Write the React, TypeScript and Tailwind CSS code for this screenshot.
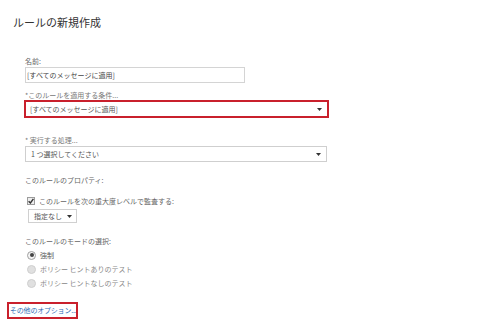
import React from "react";

const font = { fontFamily: '"Noto Sans CJK JP", "Noto Sans", sans-serif' };

function Arrow() {
  return (
    <svg width="5" height="3" viewBox="0 0 5 3" className="shrink-0">
      <path d="M0 0h5L2.5 3z" fill="#333" />
    </svg>
  );
}

function Radio({ checked, label }: { checked?: boolean; label: string }) {
  return (
    <div className="flex items-center h-[14px] gap-[4px]">
      <span
        className={
          "w-[9px] h-[9px] rounded-full border flex items-center justify-center " +
          (checked ? "border-[#a0a0a0] bg-[#f4f4f4]" : "border-[#cfcfcf] bg-[#e0e0e0]")
        }
      >
        {checked && <span className="w-[4px] h-[4px] rounded-full bg-[#444]" />}
      </span>
      <span className={checked ? "text-[#555]" : "text-[#888]"}>{label}</span>
    </div>
  );
}

export default function App() {
  return (
    <div className="w-[480px] h-[320px] bg-white overflow-hidden flex flex-col whitespace-nowrap" style={font}>
      {/* Title */}
      <div className="pt-[14px] pl-[13px] text-[11px] leading-[16px] text-[#333]">ルールの新規作成</div>

      {/* Form */}
      <div className="pl-[25px] flex flex-col text-[7px] text-[#666]">
        <div className="mt-[26px] h-[10px] leading-[10px]">名前:</div>
        <div className="mt-[1px] w-[220px] h-[16px] border border-[#d4d4d4] flex items-center pl-[1px] text-[#444]">
          [すべてのメッセージに適用]
        </div>

        <div className="mt-[7px] h-[10px] leading-[10px] text-[#777]">*このルールを適用する条件...</div>
        <div className="-ml-[1px] w-[305px] h-[18px] border-2 border-[#c9202c] flex items-center justify-between pl-[4px] pr-[5px] text-[#555]">
          <span>[すべてのメッセージに適用]</span>
          <Arrow />
        </div>

        <div className="mt-[17px] h-[10px] leading-[10px] text-[#777]">* 実行する処理...</div>
        <div className="mt-[1px] w-[302px] h-[16px] border border-[#cfcfcf] flex items-center justify-between pl-[5px] pr-[5px] text-[#555]">
          <span>1 つ選択してください</span>
          <Arrow />
        </div>

        <div className="mt-[13px] h-[10px] leading-[10px]">このルールのプロパティ:</div>

        <div className="mt-[11px] h-[10px] flex items-center gap-[4px] ml-[2px]">
          <span className="w-[8px] h-[8px] border border-[#9c9c9c] bg-[#eee] flex items-center justify-center">
            <svg width="6" height="6" viewBox="0 0 6 6">
              <path d="M0.6 3.2L2.4 5L5.4 0.8" stroke="#333" strokeWidth="1.4" fill="none" />
            </svg>
          </span>
          <span>このルールを次の重大度レベルで監査する:</span>
        </div>

        <div className="mt-[3px] ml-[3px] w-[49px] h-[14px] border border-[#d0d0d0] flex items-center justify-between pl-[5px] pr-[4px] text-[#555]">
          <span>指定なし</span>
          <Arrow />
        </div>

        <div className="mt-[13px] h-[10px] leading-[10px]">このルールのモードの選択:</div>

        <div className="mt-[2px] ml-[2px] flex flex-col">
          <Radio checked label="強制" />
          <Radio label="ポリシー ヒントありのテスト" />
          <Radio label="ポリシー ヒントなしのテスト" />
        </div>
      </div>

      {/* Link */}
      <div className="mt-[12px] ml-[7px] w-[71px] h-[17px] border-2 border-[#c9202c] flex items-center pl-[1px] text-[7px] tracking-[-0.2px] text-[#2f6db5] overflow-hidden">
        その他のオプション...
      </div>
    </div>
  );
}
